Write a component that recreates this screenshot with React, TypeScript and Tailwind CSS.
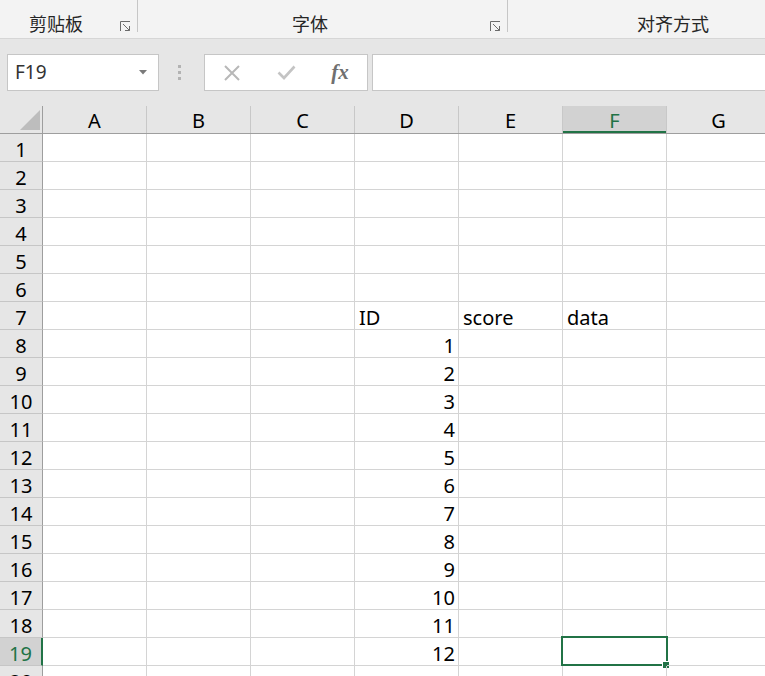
import React from 'react'

const COLS = ['A', 'B', 'C', 'D', 'E', 'F', 'G']
const ROWS = Array.from({ length: 20 }, (_, i) => i + 1)
const SEL_COL = 'F'
const SEL_ROW = 19

// cell contents: row -> col -> value
const cells: Record<number, Record<string, { v: string; right?: boolean }>> = {
  7: { D: { v: 'ID' }, E: { v: 'score' }, F: { v: 'data' } },
}
for (let i = 1; i <= 12; i++) {
  cells[7 + i] = { D: { v: String(i), right: true } }
}

const Launcher = () => (
  <svg width="12" height="11" viewBox="0 0 12 11" fill="none" stroke="#6b6b6b" strokeWidth="1">
    <path d="M0.5 10 V0.5 H10" />
    <path d="M3 3 L9.5 9.5" />
    <path d="M9.5 5 V9.5 H5" />
  </svg>
)

const Ribbon = () => (
  <div className="flex items-start h-[39px] bg-[#f3f3f3] border-b border-[#d6d6d6] text-[18px] leading-[18px] text-[#262626]">
    <div className="flex w-[138px] h-[32px] border-r border-[#c6c6c6]">
      <span className="ml-[29px] pt-[14px]">剪贴板</span>
      <div className="ml-auto mr-[5px] mt-[21px]">
        <Launcher />
      </div>
    </div>
    <div className="flex w-[370px] h-[32px] border-r border-[#c6c6c6]">
      <span className="ml-[154px] pt-[14px]">字体</span>
      <div className="ml-auto mr-[5px] mt-[21px]">
        <Launcher />
      </div>
    </div>
    <div className="flex h-[32px]">
      <span className="ml-[129px] pt-[14px]">对齐方式</span>
    </div>
  </div>
)

const FormulaBar = () => (
  <div className="flex items-start h-[67px] pt-[15px] bg-[#e6e6e6]">
    <div className="ml-[7px] w-[152px] h-[37px] border border-[#c6c6c6] bg-white flex items-center pl-[7px] pr-[11px]">
      <span className="text-[19px] leading-none text-[#333] font-['Noto_Sans',sans-serif]">F19</span>
      <svg className="ml-auto" width="8" height="5" viewBox="0 0 8 5">
        <path d="M0 0 H8 L4 4.5 Z" fill="#7a7a7a" />
      </svg>
    </div>
    <div className="ml-[19px] h-[37px] flex flex-col justify-center gap-[3px]">
      <div className="w-[3px] h-[3px] bg-[#b3b3b3]" />
      <div className="w-[3px] h-[3px] bg-[#b3b3b3]" />
      <div className="w-[3px] h-[3px] bg-[#b3b3b3]" />
    </div>
    <div className="ml-[23px] w-[164px] h-[37px] border border-[#c6c6c6] bg-white flex">
      <div className="w-[54px] flex items-center justify-center">
        <svg width="16" height="16" viewBox="0 0 16 16" stroke="#b8b8b8" strokeWidth="2">
          <path d="M1 1 L15 15 M15 1 L1 15" />
        </svg>
      </div>
      <div className="w-[54px] flex items-center justify-center">
        <svg width="19" height="15" viewBox="0 0 19 15" fill="none" stroke="#c4c4c4" strokeWidth="2.6">
          <path d="M1.5 7.5 L7 13 L17.5 1.5" />
        </svg>
      </div>
      <div className="w-[54px] flex items-center justify-center">
        <span className="italic font-bold text-[21px] leading-none text-[#707070] font-['Liberation_Serif',serif]">fx</span>
      </div>
    </div>
    <div className="ml-[4px] flex-1 h-[37px] border border-r-0 border-[#c6c6c6] bg-white" />
  </div>
)

const HeaderRow = () => (
  <div className="flex h-[28px] bg-[#e6e6e6] border-b border-[#9e9e9e]">
    <div className="w-[43px] shrink-0 border-r border-[#9e9e9e] flex items-end justify-end pr-[2px] pb-[3px]">
      <svg width="20" height="20" viewBox="0 0 20 20">
        <polygon points="20,0 20,20 0,20" fill="#bdbdbd" />
      </svg>
    </div>
    {COLS.map((c) => {
      const sel = c === SEL_COL
      return (
        <div
          key={c}
          className={`w-[104px] shrink-0 border-r border-[#c8c8c8] flex items-center justify-center pt-[3px] text-[20px] leading-none ${
            sel ? 'bg-[#d2d2d2] text-[#217346] shadow-[inset_0_-2px_0_#217346]' : 'text-black'
          }`}
        >
          {c}
        </div>
      )
    })}
  </div>
)

const Row = ({ r }: { r: number }) => {
  const selRow = r === SEL_ROW
  return (
    <div className="flex h-[28px]">
      <div
        className={`w-[43px] shrink-0 border-b border-[#c6c6c6] flex items-end justify-center pb-[1px] text-[20px] leading-none ${
          selRow
            ? 'bg-[#d2d2d2] text-[#217346] border-r-2 border-r-[#217346]'
            : 'bg-[#e6e6e6] text-black border-r border-r-[#9e9e9e]'
        }`}
      >
        {r}
      </div>
      {COLS.map((c) => {
        const cell = cells[r]?.[c]
        const sel = selRow && c === SEL_COL
        return (
          <div
            key={c}
            className={`relative w-[104px] shrink-0 border-r border-b border-[#d4d4d4] flex items-end pb-[1px] text-[20px] leading-none text-black ${
              cell?.right ? 'justify-end pr-[3px]' : 'justify-start pl-[4px]'
            }`}
          >
            {cell?.v}
            {sel && (
              <>
                <div className="absolute top-[-2px] left-[-2px] w-[107px] h-[30px] border-2 border-[#217346]" />
                <div className="absolute right-[-4px] bottom-[-4px] w-[8px] h-[8px] bg-[#217346] border border-white" />
              </>
            )}
          </div>
        )
      })}
    </div>
  )
}

export default function App() {
  return (
    <div className="w-[765px] h-[676px] overflow-hidden bg-white font-['Noto_Sans','Noto_Sans_CJK_SC',sans-serif]">
      <div className="font-['Noto_Sans_CJK_SC',sans-serif]">
        <Ribbon />
      </div>
      <FormulaBar />
      <HeaderRow />
      {ROWS.map((r) => (
        <Row key={r} r={r} />
      ))}
    </div>
  )
}
